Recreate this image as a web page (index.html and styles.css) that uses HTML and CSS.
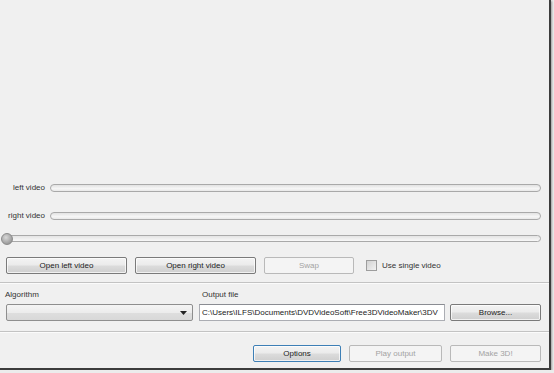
FILE: index.html
```html
<!DOCTYPE html>
<html>
<head>
<meta charset="utf-8">
<link rel="stylesheet" href="styles.css">
</head>
<body>
<div class="window">
  <div class="preview"></div>

  <div class="track-row row-left">
    <span class="track-label">left video</span>
    <div class="track"></div>
  </div>
  <div class="track-row row-right">
    <span class="track-label">right video</span>
    <div class="track"></div>
  </div>

  <div class="slider-row">
    <div class="slider-track"></div>
    <div class="slider-knob"></div>
  </div>

  <div class="button-row">
    <button class="btn btn-open">Open left video</button>
    <button class="btn btn-open">Open right video</button>
    <button class="btn btn-swap" disabled>Swap</button>
    <label class="check">
      <span class="check-box"></span>
      <span>Use single video</span>
    </label>
  </div>

  <div class="separator sep-1"></div>

  <div class="field-labels">
    <span class="lbl-algo">Algorithm</span>
    <span class="lbl-out">Output file</span>
  </div>

  <div class="field-row">
    <div class="combo">
      <svg class="combo-arrow" width="7" height="4" viewBox="0 0 7 4"><path d="M0 0h7L3.5 4z" fill="#222"/></svg>
    </div>
    <div class="path-input">C:\Users\ILFS\Documents\DVDVideoSoft\Free3DVideoMaker\3DV</div>
    <button class="btn btn-browse">Browse...</button>
  </div>

  <div class="separator sep-2"></div>

  <div class="bottom-row">
    <button class="btn btn-options">Options</button>
    <button class="btn btn-play" disabled>Play output</button>
    <button class="btn btn-make" disabled>Make 3D!</button>
  </div>
</div>
</body>
</html>
```

FILE: styles.css
```css
html, body {
  margin: 0;
  padding: 0;
  background: #ececec;
}

body {
  font-family: "Liberation Sans", Arial, sans-serif;
  font-size: 8px;
  color: #333333;
}

.window {
  width: 549px;
  height: 368px;
  background: #f0f0f0;
  border-right: 2px solid #3c3c3c;
  border-bottom: 2px solid #3c3c3c;
  box-shadow: 1px 1px 2px rgba(0,0,0,0.35);
  display: flex;
  flex-direction: column;
  overflow: hidden;
}

.preview {
  height: 184px;
  flex: none;
}

.track-row {
  display: flex;
  align-items: center;
  height: 8px;
  padding-right: 8px;
}

.row-right {
  margin-top: 20px;
}

.track-label {
  width: 45px;
  margin-right: 5px;
  text-align: right;
  white-space: nowrap;
  line-height: 10px;
}

.track {
  flex: 1;
  height: 6px;
  border: 1px solid #a9a9a9;
  border-radius: 4px;
  background: linear-gradient(#e2e2e2, #f6f6f6 60%, #e8e8e8);
}

.slider-row {
  position: relative;
  height: 11px;
  margin-top: 13px;
  margin-left: 4px;
  margin-right: 8px;
  display: flex;
  align-items: center;
}

.slider-track {
  flex: 1;
  height: 5px;
  border: 1px solid #a9a9a9;
  border-radius: 4px;
  background: linear-gradient(#e4e4e4, #f8f8f8);
}

.slider-knob {
  position: absolute;
  left: -3px;
  top: 0;
  width: 10px;
  height: 10px;
  border-radius: 50%;
  border: 1px solid #8a8a8a;
  background: radial-gradient(circle at 40% 35%, #d8d8d8, #9d9d9d 70%, #888);
}

.button-row {
  display: flex;
  align-items: center;
  height: 16px;
  margin-top: 13px;
  padding-left: 6px;
}

.btn {
  font-family: inherit;
  font-size: 8px;
  color: #222;
  height: 17px;
  padding: 0;
  border: 1px solid #7a7a7a;
  border-radius: 2px;
  background: linear-gradient(#f3f3f3, #ebebeb 48%, #dcdcdc 52%, #cfcfcf);
  box-shadow: inset 0 0 0 1px rgba(255,255,255,0.7);
  flex: none;
}

.btn:disabled {
  color: #a3a3a3;
  border-color: #b9b9b9;
  background: #f4f4f4;
  box-shadow: none;
}

.btn-open {
  width: 121px;
  margin-right: 8px;
}

.btn-swap {
  width: 90px;
}

.check {
  display: flex;
  align-items: center;
  margin-left: 12px;
  color: #333;
}

.check-box {
  width: 9px;
  height: 9px;
  border: 1px solid #9d9d9d;
  background: linear-gradient(135deg, #d2d2d2, #f2f2f2);
  margin-right: 5px;
}

.separator {
  height: 1px;
  background: #c3c3c3;
  border-bottom: 1px solid #fbfbfb;
  flex: none;
}

.sep-1 {
  margin-top: 9px;
}

.sep-2 {
  margin-top: 10px;
}

.field-labels {
  display: flex;
  height: 10px;
  line-height: 10px;
  margin-top: 6px;
  color: #333;
}

.lbl-algo {
  width: 197px;
  padding-left: 5px;
}

.field-row {
  display: flex;
  align-items: center;
  height: 17px;
  margin-top: 4px;
}

.combo {
  position: relative;
  width: 185px;
  height: 15px;
  margin-left: 6px;
  border: 1px solid #8e8e8e;
  border-radius: 2px;
  background: linear-gradient(#f4f4f4, #ececec 50%, #dedede 52%, #d8d8d8);
  flex: none;
}

.combo-arrow {
  position: absolute;
  right: 5px;
  top: 6px;
}

.path-input {
  width: 242px;
  height: 15px;
  margin-left: 6px;
  padding-left: 2px;
  border: 1px solid #abadb3;
  border-top-color: #8a8c92;
  background: #ffffff;
  line-height: 15px;
  white-space: nowrap;
  overflow: hidden;
  color: #222;
  flex: none;
}

.btn-browse {
  width: 91px;
  margin-left: 5px;
}

.bottom-row {
  display: flex;
  justify-content: flex-end;
  margin-top: 12px;
  padding-right: 8px;
}

.btn-options {
  width: 88px;
  margin-right: 8px;
  border-color: #3d7fb6;
}

.btn-play {
  width: 93px;
  margin-right: 8px;
}

.btn-make {
  width: 91px;
}
```
